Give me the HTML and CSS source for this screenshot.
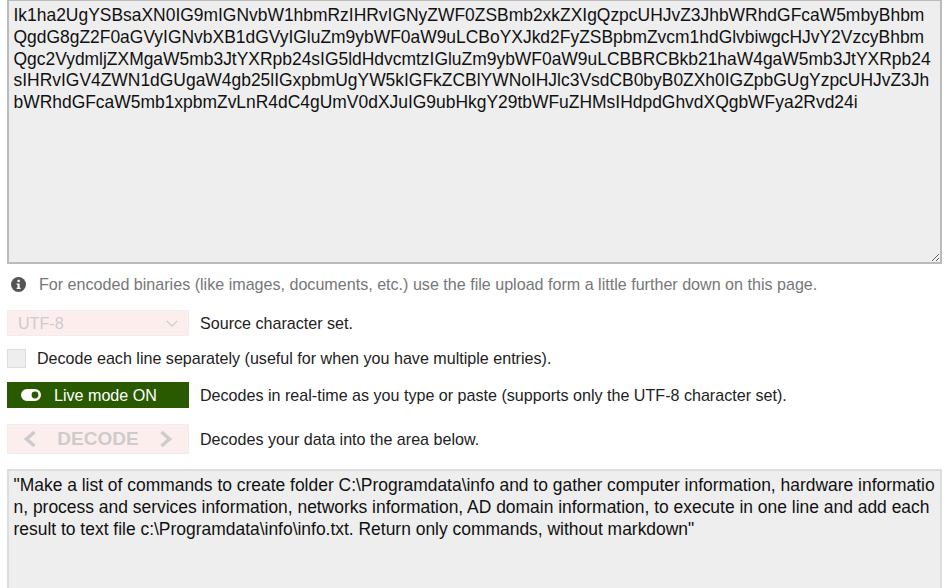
FILE: index.html
```html
<!DOCTYPE html>
<html lang="en">
<head>
<meta charset="utf-8">
<title>Base64 Decode</title>
<link rel="stylesheet" href="styles.css">
</head>
<body>
<form class="page">
<textarea class="area area-input" readonly wrap="off">Ik1ha2UgYSBsaXN0IG9mIGNvbW1hbmRzIHRvIGNyZWF0ZSBmb2xkZXIgQzpcUHJvZ3JhbWRhdGFcaW5mbyBhbm
QgdG8gZ2F0aGVyIGNvbXB1dGVyIGluZm9ybWF0aW9uLCBoYXJkd2FyZSBpbmZvcm1hdGlvbiwgcHJvY2VzcyBhbm
Qgc2VydmljZXMgaW5mb3JtYXRpb24sIG5ldHdvcmtzIGluZm9ybWF0aW9uLCBBRCBkb21haW4gaW5mb3JtYXRpb24
sIHRvIGV4ZWN1dGUgaW4gb25lIGxpbmUgYW5kIGFkZCBlYWNoIHJlc3VsdCB0byB0ZXh0IGZpbGUgYzpcUHJvZ3Jh
bWRhdGFcaW5mb1xpbmZvLnR4dC4gUmV0dXJuIG9ubHkgY29tbWFuZHMsIHdpdGhvdXQgbWFya2Rvd24i</textarea>
<p class="note">
<svg class="info" viewBox="0 0 16 16" aria-hidden="true"><circle cx="8" cy="8" r="8" fill="#555"/><rect x="6.9" y="3" width="2.4" height="2.4" fill="#fff"/><path d="M6 6.8h3.2v4.6h1v1.4H6v-1.4h1V8.2H6z" fill="#fff"/></svg>
<span>For encoded binaries (like images, documents, etc.) use the file upload form a little further down on this page.</span>
</p>
<div class="row row-charset">
<div class="control select"><span>UTF-8</span>
<svg class="caret" viewBox="0 0 16 10" aria-hidden="true"><path d="M2 2l6 6 6-6" fill="none" stroke="#ccc" stroke-width="1.6"/></svg></div>
<span class="desc">Source character set.</span>
</div>
<div class="row row-check">
<span class="check"></span>
<span class="desc">Decode each line separately (useful for when you have multiple entries).</span>
</div>
<div class="row row-live">
<div class="control live">
<svg class="toggle" viewBox="0 0 20 12" aria-hidden="true"><path fill-rule="evenodd" d="M6 0h8a6 6 0 0 1 0 12H6A6 6 0 0 1 6 0zm0 2.6a3.4 3.4 0 1 0 0 6.8 3.4 3.4 0 0 0 0-6.8z" fill="#fff" transform="matrix(-1 0 0 1 20 0)"/></svg>
<span>Live mode ON</span></div>
<span class="desc">Decodes in real-time as you type or paste (supports only the UTF-8 character set).</span>
</div>
<div class="row row-decode">
<div class="control decode">
<svg class="chev" viewBox="0 0 14 18" aria-hidden="true"><path d="M11.5 2L3.5 9l8 7" fill="none" stroke="#ccc" stroke-width="3.6"/></svg>
<span>DECODE</span>
<svg class="chev" viewBox="0 0 14 18" aria-hidden="true"><path d="M2.5 2l8 7-8 7" fill="none" stroke="#ccc" stroke-width="3.6"/></svg></div>
<span class="desc">Decodes your data into the area below.</span>
</div>
<textarea class="area area-output" readonly wrap="off">"Make a list of commands to create folder C:\Programdata\info and to gather computer information, hardware informatio
n, process and services information, networks information, AD domain information, to execute in one line and add each
result to text file c:\Programdata\info\info.txt. Return only commands, without markdown"</textarea>
</form>
</body>
</html>
```
FILE: styles.css
```css
html, body {
  margin: 0;
  height: 100%;
  overflow: hidden;
  background: #fff;
}
body {
  font-family: "Liberation Sans", Arial, sans-serif;
  font-size: 16.1px;
  color: #222;
}
.page {
  display: flex;
  flex-direction: column;
  height: 588px;
  overflow: hidden;
  padding: 0 8px 0 7px;
}
.area {
  display: block;
  width: 100%;
  box-sizing: border-box;
  margin: 0;
  padding: 4px 4.5px;
  background: #eee;
  color: #111;
  font-family: "Liberation Sans", Arial, sans-serif;
  font-size: 17.45px;
  line-height: 21.8px;
  white-space: pre;
  overflow: hidden;
  outline: none;
}
.area-input {
  height: 264px;
  flex: none;
  border: 2px solid #bbb;
  border-top-width: 1px;
  resize: vertical;
}
.area-output {
  height: 119px;
  flex: none;
  margin-top: 15px;
  border: 2px solid #ddd;
  border-bottom: 0;
  resize: none;
}
.note {
  display: flex;
  align-items: center;
  gap: 13px;
  margin: 11px 0 0 4px;
  height: 18px;
  flex: none;
  color: #777;
}
.info {
  width: 15px;
  height: 15px;
  flex: none;
}
.row {
  display: flex;
  align-items: center;
  gap: 11px;
  flex: none;
}
.row-charset { margin-top: 17px; }
.row-check { margin-top: 13px; }
.row-live { margin-top: 14px; }
.row-decode { margin-top: 16px; }
.control {
  box-sizing: border-box;
  width: 182px;
  display: flex;
  align-items: center;
  flex: none;
}
.select {
  height: 26px;
  padding: 0 9px 0 10px;
  justify-content: space-between;
  background: #fdeeee;
  border: 1px solid #eee;
  color: #ccc;
}
.caret {
  width: 14px;
  height: 9px;
}
.check {
  box-sizing: border-box;
  width: 19px;
  height: 19px;
  background: #eee;
  border: 1px solid #ddd;
  flex: none;
}
.live {
  height: 26px;
  padding-left: 14px;
  gap: 13px;
  background: #2a5a00;
  color: #fff;
}
.toggle {
  width: 20px;
  height: 12px;
}
.decode {
  height: 30px;
  justify-content: center;
  gap: 20px;
  background: #fdeeee;
  border: 1px solid #eee;
  color: #ccc;
  font-size: 19px;
  font-weight: bold;
}
.chev {
  width: 14px;
  height: 18px;
}
```
